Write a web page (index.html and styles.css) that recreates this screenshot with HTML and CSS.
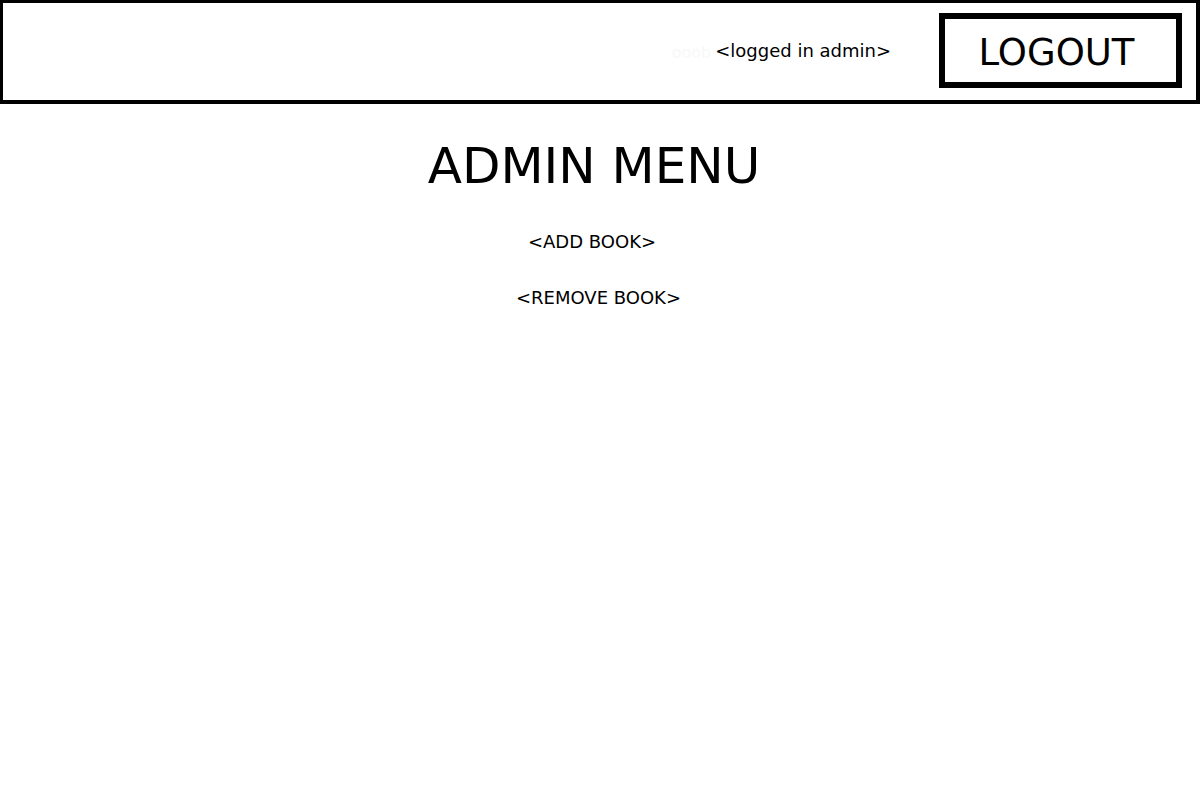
FILE: index.html
```html
<!DOCTYPE html>
<html lang="en">
<head>
<meta charset="utf-8">
<title>Admin Menu</title>
<link rel="stylesheet" href="styles.css">
</head>
<body>
<header class="topbar">
  <span class="ghost">ooob</span>
  <span class="user">&lt;logged in admin&gt;</span>
  <button class="logout">LOGOUT</button>
</header>
<main class="menu">
  <h1 class="title">ADMIN MENU</h1>
  <a class="item item-add" href="#">&lt;ADD BOOK&gt;</a>
  <a class="item item-remove" href="#">&lt;REMOVE BOOK&gt;</a>
</main>
</body>
</html>
```
FILE: styles.css
```css
html, body {
  margin: 0;
  padding: 0;
  background: #fff;
  color: #000;
  font-family: "DejaVu Sans", sans-serif;
}

.topbar {
  box-sizing: border-box;
  height: 104px;
  border-style: solid;
  border-color: #000;
  border-width: 3px 4px 4px 3px;
  display: flex;
  align-items: center;
  justify-content: flex-end;
  padding-right: 14px;
}

.ghost {
  font-size: 16px;
  color: #f8f8f8;
  margin-right: 4px;
  margin-top: 2px;
}

.user {
  font-size: 18px;
  margin-right: 48px;
  margin-top: -2px;
}

.logout {
  box-sizing: border-box;
  width: 243px;
  height: 75px;
  border: 6px solid #000;
  background: #fff;
  color: #000;
  font-family: "DejaVu Sans", sans-serif;
  font-size: 37px;
  padding: 4px 8px 0 0;
  margin-bottom: 2px;
  cursor: pointer;
}

.menu {
  display: flex;
  flex-direction: column;
  align-items: center;
}

.title {
  margin: 33px 0 0 0;
  font-size: 50px;
  font-weight: normal;
  line-height: normal;
  padding-right: 12px;
}

.item {
  color: #000;
  text-decoration: none;
  font-size: 18px;
  line-height: 21px;
}

.item-add {
  margin-top: 36px;
  padding-right: 16px;
}

.item-remove {
  margin-top: 35px;
  padding-right: 3px;
}
```
